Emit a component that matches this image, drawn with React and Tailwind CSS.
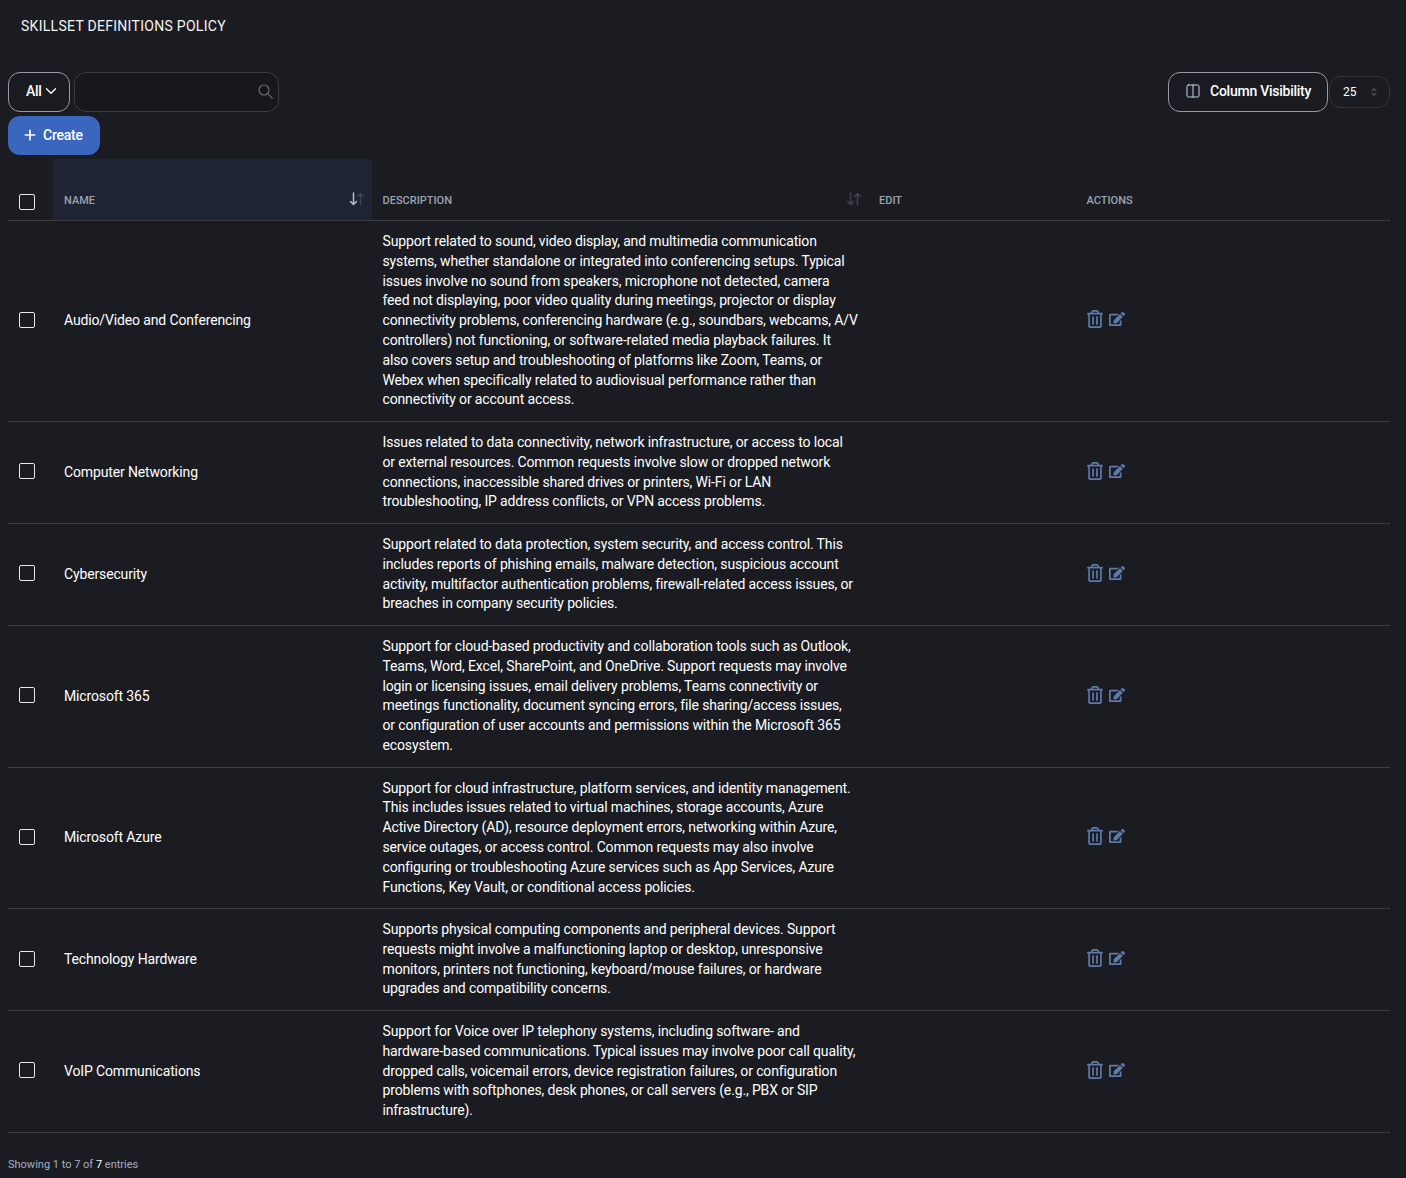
import React from "react";
import { ChevronDown, Columns2, Plus } from "lucide-react";
import { FaEdit, FaRegTrashAlt } from "react-icons/fa";

const rows = [
  {
    name: "Audio/Video and Conferencing",
    description:
      "Support related to sound, video display, and multimedia communication systems, whether standalone or integrated into conferencing setups. Typical issues involve no sound from speakers, microphone not detected, camera feed not displaying, poor video quality during meetings, projector or display connectivity problems, conferencing hardware (e.g., soundbars, webcams, A/V controllers) not functioning, or software-related media playback failures. It also covers setup and troubleshooting of platforms like Zoom, Teams, or Webex when specifically related to audiovisual performance rather than connectivity or account access.",
  },
  {
    name: "Computer Networking",
    description:
      "Issues related to data connectivity, network infrastructure, or access to local or external resources. Common requests involve slow or dropped network connections, inaccessible shared drives or printers, Wi-Fi or LAN troubleshooting, IP address conflicts, or VPN access problems.",
  },
  {
    name: "Cybersecurity",
    description:
      "Support related to data protection, system security, and access control. This includes reports of phishing emails, malware detection, suspicious account activity, multifactor authentication problems, firewall-related access issues, or breaches in company security policies.",
  },
  {
    name: "Microsoft 365",
    description:
      "Support for cloud-based productivity and collaboration tools such as Outlook, Teams, Word, Excel, SharePoint, and OneDrive. Support requests may involve login or licensing issues, email delivery problems, Teams connectivity or meetings functionality, document syncing errors, file sharing/access issues, or\u00a0configuration of user accounts and permissions within the Microsoft 365 ecosystem.",
  },
  {
    name: "Microsoft Azure",
    description:
      "Support for cloud infrastructure, platform services, and identity management. This includes issues related to virtual machines, storage accounts, Azure Active Directory (AD), resource deployment errors, networking within Azure, service outages, or access control. Common requests may also involve configuring or troubleshooting Azure services such as App Services, Azure Functions, Key Vault, or conditional access policies.",
  },
  {
    name: "Technology Hardware",
    description:
      "Supports physical computing components and peripheral devices. Support requests might involve a malfunctioning laptop or desktop, unresponsive monitors, printers not functioning, keyboard/mouse failures, or hardware upgrades and compatibility concerns.",
  },
  {
    name: "VoIP Communications",
    description:
      "Support for Voice over IP telephony systems, including software- and hardware-based communications. Typical issues may involve poor call quality, dropped calls, voicemail errors, device registration failures, or configuration problems with softphones, desk phones, or call servers (e.g., PBX or SIP infrastructure).",
  },
];

function SortIcon({ active }) {
  return (
    <svg viewBox="0 0 16 14" className="w-4 h-[14px] mb-[3px]" fill="none" strokeWidth="1.5" strokeLinecap="round" strokeLinejoin="round">
      <path d="M4.5 1v11.5M1.5 9.5l3 3 3-3" stroke={active ? "#b4bfd6" : "#3f424c"} />
      <path d="M11.5 13V1.5M8.5 4.5l3-3 3 3" stroke="#3f424c" />
    </svg>
  );
}

function Checkbox({ className = "" }) {
  return <div className={"w-4 h-4 rounded-[2px] border border-[#e5e7eb] bg-transparent " + className} />;
}

export default function App() {
  return (
    <div className="min-h-[1178px] bg-[#1a1c22] text-white font-['Roboto',sans-serif] pl-2 pr-4">
      <h1 className="pl-[13px] pt-[17px] h-[72px] text-sm leading-[18px] tracking-[0.285px] text-[#f3f4f6]">SKILLSET DEFINITIONS POLICY</h1>

      <div className="flex justify-between">
        <div className="flex gap-1">
          <button className="w-[62px] h-10 pb-0.5 pl-[17px] rounded-xl border border-[#9a9aa8] flex items-center text-sm font-medium tracking-[-0.25px]">
            All
            <ChevronDown className="w-[18px] h-[18px]" strokeWidth={1.75} />
          </button>
          <div className="w-[205px] h-10 pb-0.5 rounded-xl border border-[#3a3c44] bg-[#17181d] flex items-center justify-end pr-[5px]">
            <svg viewBox="0 0 15 15" className="w-[15px] h-[15px]" fill="none" stroke="#6b6e77" strokeWidth="1.2" strokeLinecap="round">
              <circle cx="6" cy="6" r="5" />
              <path d="M9.7 9.7l4.6 4.6" />
            </svg>
          </div>
        </div>
        <div className="flex items-center gap-px">
          <button className="w-40 h-10 pb-0.5 rounded-xl border border-[#9a9aa8] flex items-center pl-4 gap-[9px] text-sm font-medium tracking-[-0.25px]">
            <Columns2 className="w-4 h-4 text-[#c5d5f0]" strokeWidth={1.5} />
            Column Visibility
          </button>
          <div className="w-[61px] h-8 rounded-xl border border-[#33353d] flex items-center justify-between pl-[13px] pr-[11px] text-xs">
            25
            <svg viewBox="0 0 8 12" className="w-2 h-3" fill="#3f424c">
              <path d="M4 1l3 4H1zM4 11L1 7h6z" />
            </svg>
          </div>
        </div>
      </div>

      <div className="mt-1">
        <button className="w-[92px] h-[39px] pb-0.5 pl-3.5 rounded-xl bg-[#3b66bd] flex items-center gap-[5px] text-sm font-medium tracking-[-0.25px]">
          <Plus className="w-4 h-4" strokeWidth={2.5} />
          Create
        </button>
      </div>

      <table className="mt-1 w-full table-fixed border-collapse">
        <thead>
          <tr className="border-b border-[#3a3c44] text-[11px] font-medium text-[#9ca3af]">
            <th className="w-[45px] h-[61.5px] align-bottom pb-[10px] pl-[11px]">
              <Checkbox />
            </th>
            <th className="w-[319px] align-bottom pb-[11px] pl-[11px] pr-[7px] bg-[#1e2433] text-left font-medium">
              <div className="flex justify-between items-end">
                NAME
                <SortIcon active />
              </div>
            </th>
            <th className="w-[497px] align-bottom pb-[11px] pl-[10.5px] pr-[7px] text-left font-medium">
              <div className="flex justify-between items-end">
                DESCRIPTION
                <SortIcon />
              </div>
            </th>
            <th className="w-[207px] align-bottom pb-[11px] pl-[10px] text-left font-medium">EDIT</th>
            <th className="align-bottom pb-[11px] pl-[10.5px] text-left font-medium">ACTIONS</th>
          </tr>
        </thead>
        <tbody>
          {rows.map((row) => (
            <tr key={row.name} className="border-b border-[#3a3c44] text-sm tracking-[-0.14px]">
              <td className="pl-[11px]">
                <Checkbox className="mb-0.5" />
              </td>
              <td className="pl-[11px] pb-px">{row.name}</td>
              <td className="pl-[10.5px] pr-[11px] pt-[11px] pb-[10.8px] leading-[19.8px]">{row.description}</td>
              <td />
              <td className="pl-[10.5px]">
                <div className="flex items-center gap-[6px] pb-[3px] text-[#5d7aa8]">
                  <FaRegTrashAlt className="w-4 h-[18px]" />
                  <FaEdit className="w-4 h-4" />
                </div>
              </td>
            </tr>
          ))}
        </tbody>
      </table>

      <p className="mt-6 text-[11px] leading-4 text-[#a3adc2]">
        Showing 1 to 7 of <span className="text-white">7</span> entries
      </p>
    </div>
  );
}
